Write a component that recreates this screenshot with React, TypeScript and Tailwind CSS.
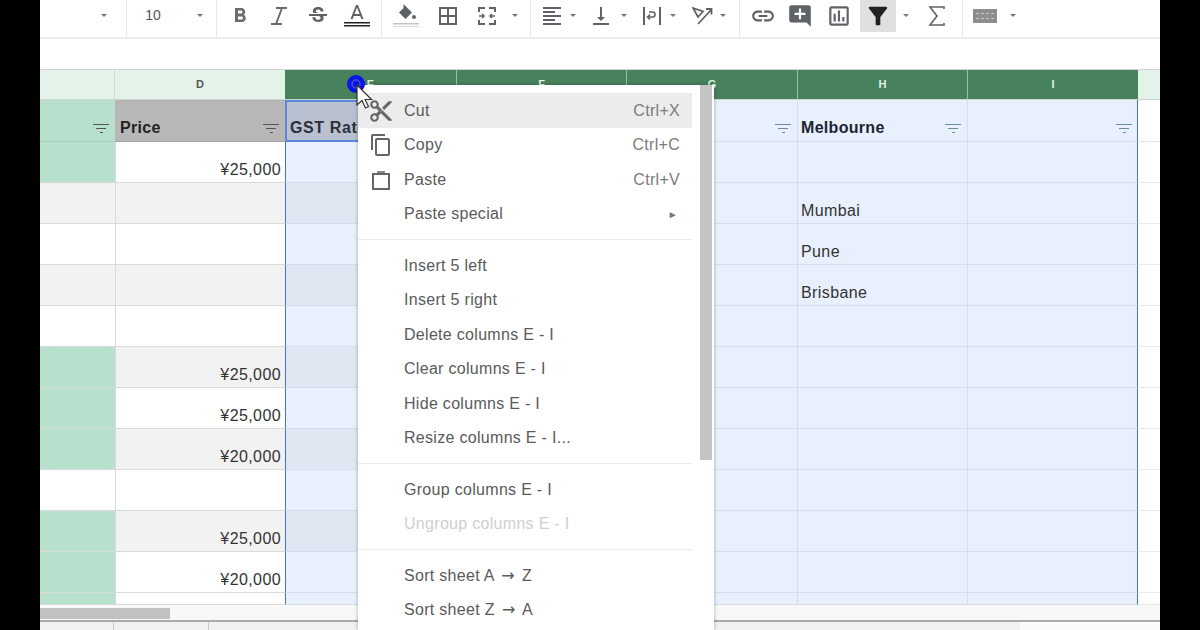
import React from 'react';

const arial = '[font-family:"Liberation_Sans",Arial,sans-serif]';
const cols = 'grid-cols-[75px_170px_172px_170px_171px_170px_170px_22px]';

const Icon = ({ d, size = 22, className = 'fill-[#5f6368]' }: { d: string; size?: number; className?: string }) => (
  <svg width={size} height={size} viewBox="0 0 24 24" className={className}>
    <path d={d} fillRule="evenodd" />
  </svg>
);

const Caret = ({ className = '' }: { className?: string }) => (
  <div className={`flex h-[31px] w-[14px] items-center justify-center ${className}`}>
    <div className="h-0 w-0 border-x-[3px] border-t-[3px] border-x-transparent border-t-[#77797c]" />
  </div>
);

const Divider = ({ className = '' }: { className?: string }) => <div className={`h-full w-px bg-[#e8e8e8] ${className}`} />;

const Slot = ({ className = '', children }: { className?: string; children: React.ReactNode }) => (
  <div className={`flex h-[31px] items-center justify-center ${className}`}>{children}</div>
);

const Toolbar = () => (
  <div className="flex h-[39px] items-start border-b-2 border-[#ececec] bg-white">
    <div className="w-[57px]" />
    <Caret />
    <Divider className="ml-[15px]" />
    <Slot className="w-[52px] text-[14px] text-[#555]">10</Slot>
    <Caret className="ml-[14px]" />
    <Divider className="ml-[9px]" />
    <Slot className="ml-[3px] w-[39px]"><Icon size={24} className="fill-[#6a6d70]" d="M15.6 10.79c.97-.67 1.65-1.77 1.65-2.79 0-2.26-1.75-4-4-4H7v14h7.04c2.09 0 3.71-1.7 3.71-3.79 0-1.52-.86-2.82-2.15-3.42zM10 6.5h3c.83 0 1.5.67 1.5 1.5s-.67 1.5-1.5 1.5h-3v-3zm3.5 9H10v-3h3.5c.83 0 1.5.67 1.5 1.5s-.67 1.5-1.5 1.5z" /></Slot>
    <Slot className="w-[39px]">
      <svg width="22" height="22" viewBox="0 0 22 22" fill="none" stroke="#6a6d70" strokeWidth="2">
        <path d="M8 3h11M3 19h11M14 3 8 19" />
      </svg>
    </Slot>
    <Slot className="w-[39px]"><Icon size={24} d="M6.85 7.08C6.85 4.37 9.45 3 12.24 3c1.64 0 3 .49 3.9 1.28.77.65 1.46 1.73 1.46 3.24h-3.01c0-.31-.05-.59-.15-.85-.29-.86-1.2-1.28-2.25-1.28-1.86 0-2.34.93-2.34 1.7 0 .48.25.88.74 1.21.38.25.77.48 1.41.7H7.39c-.21-.34-.54-.89-.54-1.92zM21 12v-2H3v2h9.62c1.15.45 1.96.75 1.96 1.97 0 1-.81 1.67-2.28 1.67-1.54 0-2.93-.54-2.93-2.51H6.4c0 .55.08 1.13.24 1.58.81 2.29 3.29 3.3 5.67 3.3 2.27 0 5.3-.89 5.3-4.05 0-.3-.01-1.16-.48-1.96H21z" /></Slot>
    <Slot className="w-[39px]">
      <svg width="28" height="28" viewBox="0 0 28 28">
        <path className="fill-[#5f6368]" fillRule="evenodd" d="M13 3 7.5 17h2.2l1.1-3h6.4l1.1 3h2.2L15 3h-2zm-1.5 9L14 5.5l2.5 6.5h-5z" />
        <rect x="1" y="20" width="26" height="1.5" fill="#222" />
        <rect x="1" y="23" width="26" height="1.5" fill="#222" />
      </svg>
    </Slot>
    <div className="ml-[5px] h-full"><Divider /></div>
    <Slot className="w-[48px]">
      <svg width="28" height="28" viewBox="0 0 28 28">
        <path className="fill-[#5f6368]" d="M11.5 2 20 10.5 13.5 17 7 10.5 11.5 6z" />
        <circle cx="22" cy="15" r="2" fill="#5f6368" />
        <rect x="1" y="21" width="26" height="1.5" fill="#c4c4c4" />
        <rect x="1" y="24" width="26" height="1" fill="#d8d8d8" />
      </svg>
    </Slot>
    <Slot className="w-[35px]"><Icon size={24} d="M3 3v18h18V3H3zm8 16H5v-6h6v6zm0-8H5V5h6v6zm8 8h-6v-6h6v6zm0-8h-6V5h6v6z" /></Slot>
    <Slot className="w-[44px]">
      <svg width="22" height="22" viewBox="0 0 22 22" fill="none" stroke="#5f6368" strokeWidth="2">
        <path d="M3 7V3h6M13 3h6v4M3 15v4h6M13 19h6v-4" />
        <path d="M3 11h5M6 9l2 2-2 2M19 11h-5M16 9l-2 2 2 2" strokeWidth="1.6" />
      </svg>
    </Slot>
    <Caret className="-ml-px" />
    <div className="ml-[8px] h-full"><Divider /></div>
    <Slot className="ml-[7px] w-[28px]"><Icon size={24} d="M15 15H3v2h12v-2zm0-8H3v2h12V7zM3 13h18v-2H3v2zm0 8h18v-2H3v2zM3 3v2h18V3H3z" /></Slot>
    <Caret />
    <Slot className="ml-[7px] w-[28px]"><Icon size={24} d="M16 13h-3V3h-2v10H8l4 4 4-4zM4 19v2h16v-2H4z" /></Slot>
    <Caret className="ml-[2px]" />
    <Slot className="ml-[7px] w-[28px]">
      <svg width="20" height="20" viewBox="0 0 20 20" fill="none" stroke="#5f6368" strokeWidth="2">
        <path d="M2 1v18M18 1v18" />
        <path d="M7 6h3.5a2.5 2.5 0 0 1 0 5H6M8 8.5 5.5 11 8 13.5" strokeWidth="1.6" />
      </svg>
    </Slot>
    <Caret />
    <Slot className="ml-[8px] w-[28px]">
      <svg width="21" height="19" viewBox="0 0 21 19" fill="none" stroke="#5f6368" strokeWidth="1.8">
        <path d="M1 2 11 5.5 6 11zM6 18 19 4M14 3h5.5v5.5" />
      </svg>
    </Slot>
    <Caret />
    <div className="ml-[9px] h-full"><Divider /></div>
    <Slot className="ml-[9px] w-[28px]"><Icon size={26} d="M3.9 12c0-1.71 1.39-3.1 3.1-3.1h4V7H7c-2.76 0-5 2.24-5 5s2.24 5 5 5h4v-1.9H7c-1.71 0-3.1-1.39-3.1-3.1zM8 13h8v-2H8v2zm9-6h-4v1.9h4c1.71 0 3.1 1.39 3.1 3.1s-1.39 3.1-3.1 3.1h-4V17h4c2.76 0 5-2.24 5-5s-2.24-5-5-5z" /></Slot>
    <Slot className="ml-[9px] w-[28px]"><Icon size={26} d="M22 4c0-1.1-.9-2-2-2H4c-1.1 0-2 .9-2 2v12c0 1.1.9 2 2 2h14l4 4V4zm-5 7h-4v4h-2v-4H7V9h4V5h2v4h4v2z" /></Slot>
    <Slot className="ml-[11px] w-[28px]"><Icon size={26} d="M9 17H7v-7h2v7zm4 0h-2V7h2v10zm4 0h-2v-4h2v4zm2 2H5V5h14v14zm0-16H5c-1.1 0-2 .9-2 2v14c0 1.1.9 2 2 2h14c1.1 0 2-.9 2-2V5c0-1.1-.9-2-2-2z" /></Slot>
    <div className="ml-[7px] flex h-[32px] w-[36px] items-center justify-center bg-[#e0e0e0]">
      <Icon size={28} className="fill-[#202124]" d="M4.25 5.61C6.27 8.2 10 13 10 13v6c0 .55.45 1 1 1h2c.55 0 1-.45 1-1v-6s3.72-4.8 5.74-7.39C20.25 4.95 19.78 4 18.95 4H5.04c-.83 0-1.3.95-.79 1.61z" />
    </div>
    <Caret className="ml-[3px]" />
    <Slot className="ml-[10px] w-[28px]">
      <svg width="18" height="22" viewBox="0 0 18 22" fill="none" stroke="#5f6368" strokeWidth="1.6">
        <path d="M16 4V2H2l7 9-7 9h14v-2" />
      </svg>
    </Slot>
    <div className="ml-[11px] h-full"><Divider /></div>
    <Slot className="ml-[8px] w-[28px]">
      <div className="flex h-[14px] w-[24px] items-center justify-center bg-[#8d8d8d]">
        <div className="h-[6px] w-[18px] border-y border-dashed border-[#c9c9c9]" />
      </div>
    </Slot>
    <Caret className="ml-[7px]" />
  </div>
);

const FilterLines = ({ className = 'bg-[#555]' }: { className?: string }) => (
  <div className="flex w-4 shrink-0 flex-col items-center gap-[2.5px] pb-[8px]">
    <div className={`h-[1.5px] w-4 ${className}`} />
    <div className={`h-[1.5px] w-[10px] ${className}`} />
    <div className={`h-[1.5px] w-[3px] ${className}`} />
  </div>
);

const ColHead = ({ label, className }: { label: string; className: string }) => (
  <div className={`flex items-center justify-center text-[11px] font-bold ${className}`}>{label}</div>
);

const ColumnHeader = () => (
  <div className={`grid h-[31px] border-y border-[#cfd4d0] ${cols}`}>
    <div className="border-r border-[#cfdcd4] bg-[#e4f3ea]" />
    <ColHead label="D" className="bg-[#e4f3ea] text-[#555]" />
    <ColHead label="E" className="border-r border-[#9dbca9] bg-[#47825c] text-[#dff3e6]" />
    <ColHead label="F" className="border-r border-[#9dbca9] bg-[#47825c] text-[#dff3e6]" />
    <ColHead label="G" className="border-r border-[#9dbca9] bg-[#47825c] text-[#dff3e6]" />
    <ColHead label="H" className="border-r border-[#9dbca9] bg-[#47825c] text-[#dff3e6]" />
    <ColHead label="I" className="bg-[#47825c] text-[#dff3e6]" />
    <div className="bg-[#e4f3ea]" />
  </div>
);

const HeaderRow = () => (
  <div className={`grid h-[42px] text-[16px] font-bold leading-[20px] tracking-[0.3px] text-[#222] ${cols}`}>
    <div className="flex items-end justify-end border-b border-[#a9cdbb] bg-[#b7e1cd] pr-[6px]"><FilterLines /></div>
    <div className="flex items-end justify-between border-b border-[#a5a5a5] bg-[#b7b7b7] pl-[5px] pr-[6px]">
      <span className="pb-[3px]">Price</span>
      <FilterLines />
    </div>
    <div className="flex items-end overflow-hidden border-2 border-[#5a86dc] bg-[#b9c1d1] pl-[3px] text-[#2c3038]">
      <span className="pb-[2px] tracking-[0.6px]">GST Rate</span>
    </div>
    <div className="flex items-end justify-end border-b border-r border-[#d5dcea] bg-[#e8f0fe] pr-[6px]"><FilterLines className="bg-[#6c8f96]" /></div>
    <div className="flex items-end justify-end border-b border-r border-[#d5dcea] bg-[#e8f0fe] pr-[6px]"><FilterLines className="bg-[#6c8f96]" /></div>
    <div className="flex items-end justify-between border-b border-r border-[#d5dcea] bg-[#e8f0fe] pl-[3px] pr-[6px] text-[#1d2433]">
      <span className="pb-[3px]">Melbourne</span>
      <FilterLines className="bg-[#6c8f96]" />
    </div>
    <div className="flex items-end justify-end border-b border-r border-[#d5dcea] border-r-[#3f72e0] bg-[#e8f0fe] pr-[5px]"><FilterLines className="bg-[#6c8f96]" /></div>
    <div className="border-b border-[#e4e4e4] bg-white" />
  </div>
);

const rows = [
  { left: 'bg-[#b7e1cd]', gray: false, price: '¥25,000', city: '' },
  { left: 'bg-[#f2f2f2]', gray: true, price: '', city: 'Mumbai' },
  { left: 'bg-white', gray: false, price: '', city: 'Pune' },
  { left: 'bg-[#f2f2f2]', gray: true, price: '', city: 'Brisbane' },
  { left: 'bg-white', gray: false, price: '', city: '' },
  { left: 'bg-[#b7e1cd]', gray: true, price: '¥25,000', city: '' },
  { left: 'bg-[#b7e1cd]', gray: false, price: '¥25,000', city: '' },
  { left: 'bg-[#b7e1cd]', gray: true, price: '¥20,000', city: '' },
  { left: 'bg-white', gray: false, price: '', city: '' },
  { left: 'bg-[#b7e1cd]', gray: true, price: '¥25,000', city: '' },
  { left: 'bg-[#b7e1cd]', gray: false, price: '¥20,000', city: '' },
  { left: 'bg-[#b7e1cd]', gray: false, price: '', city: '' },
];

const blueCell = 'border-b border-r border-[#d5dcea] bg-[#e8f0fe]';

const DataRow = ({ row, last }: { row: (typeof rows)[number]; last: boolean }) => (
  <div className={`grid text-[16px] leading-[20px] tracking-[0.4px] text-[#333] ${cols} ${last ? 'h-[12px]' : 'h-[41px]'}`}>
    <div className={`border-b border-[#dadada] ${row.left}`} />
    <div className={`flex items-end justify-end border-b border-l border-[#dadada] pb-[2px] pr-[4px] ${row.gray ? 'bg-[#f2f2f2]' : 'bg-white'}`}>{row.price}</div>
    <div className={`border-b border-l border-r border-b-[#d5dcea] border-l-[#3f72e0] border-r-[#d5dcea] ${row.gray ? 'bg-[#dfe7f3]' : 'bg-[#e8f0fe]'}`} />
    <div className={blueCell} />
    <div className={blueCell} />
    <div className={`flex items-end pb-[2px] pl-[3px] ${blueCell}`}>{row.city}</div>
    <div className="border-b border-r border-b-[#d5dcea] border-r-[#3f72e0] bg-[#e8f0fe]" />
    <div className="border-b border-[#e8e8e8] bg-white" />
  </div>
);

const BottomBars = () => (
  <>
    <div className="h-[17px] border-b-2 border-[#aaa] bg-[#f8f8f8] pt-[3px]">
      <div className="h-[11px] w-[130px] bg-[#c1c1c1]" />
    </div>
    <div className="flex h-[8px] bg-[#f1f1f1]">
      <div className="w-[74px] border-r border-[#c8c8c8]" />
      <div className="w-[95px] border-r border-[#c8c8c8]" />
      <div className="ml-[811px] flex-1 bg-[#fafafa]" />
    </div>
  </>
);

const MenuItem = ({ label, shortcut, icon, hover, disabled, arrow }: {
  label: React.ReactNode;
  shortcut?: string;
  icon?: React.ReactNode;
  hover?: boolean;
  disabled?: boolean;
  arrow?: boolean;
}) => (
  <div className={`flex h-[34.5px] w-[334px] shrink-0 items-center pt-px ${hover ? 'bg-[#ececec]' : ''}`}>
    <div className="flex w-[46px] shrink-0 items-center justify-center">{icon}</div>
    <span className={disabled ? 'text-[#cfcfcf]' : 'text-[#5a5a5a]'}>{label}</span>
    {shortcut && <span className="ml-auto pr-[12px] text-[#7b7b7b]">{shortcut}</span>}
    {arrow && <span className="ml-auto pr-[14px] text-[10px] text-[#777]">►</span>}
  </div>
);

const Sep = () => (
  <div className="flex h-[17px] w-[334px] shrink-0 items-center">
    <div className="h-px w-full bg-[#ededed]" />
  </div>
);

const SortArrow = () => <span className='mx-[2.5px] [font-family:"DejaVu_Sans",sans-serif]'>→</span>;

const Menu = () => (
  <div className={`absolute left-[358px] top-[85px] flex h-[545px] w-[356px] flex-col overflow-hidden bg-white pt-2 text-[16px] tracking-[0.3px] shadow-[0_0_4px_rgba(0,0,0,0.3)] ${arial}`}>
    <div className="absolute right-[2px] top-0 h-[375px] w-[12px] bg-[#c4c4c4]" />
    <MenuItem hover label="Cut" shortcut="Ctrl+X" icon={<Icon size={26} className="fill-[#666]" d="M9.64 7.64c.23-.5.36-1.05.36-1.64 0-2.21-1.79-4-4-4S2 3.79 2 6s1.79 4 4 4c.59 0 1.14-.13 1.64-.36L10 12l-2.36 2.36C7.14 14.13 6.59 14 6 14c-2.21 0-4 1.79-4 4s1.79 4 4 4 4-1.79 4-4c0-.59-.13-1.14-.36-1.64L12 14l7 7h3v-1L9.64 7.64zM6 8c-1.1 0-2-.89-2-2s.9-2 2-2 2 .89 2 2-.9 2-2 2zm0 12c-1.1 0-2-.89-2-2s.9-2 2-2 2 .89 2 2-.9 2-2 2zm6-7.5c-.28 0-.5-.22-.5-.5s.22-.5.5-.5.5.22.5.5-.22.5-.5.5zM19 3l-6 6 2 2 7-7V3z" />} />
    <MenuItem label="Copy" shortcut="Ctrl+C" icon={<Icon size={24} className="fill-[#666]" d="M16 1H4c-1.1 0-2 .9-2 2v14h2V3h12V1zm3 4H8c-1.1 0-2 .9-2 2v14c0 1.1.9 2 2 2h11c1.1 0 2-.9 2-2V7c0-1.1-.9-2-2-2zm0 16H8V7h11v14z" />} />
    <MenuItem label="Paste" shortcut="Ctrl+V" icon={
      <svg width="20" height="22" viewBox="0 0 20 22" fill="none" stroke="#666" strokeWidth="2">
        <path d="M2 5h16v15H2z" />
        <path d="M7 6V3h6v3" strokeWidth="1.6" />
      </svg>
    } />
    <MenuItem label="Paste special" arrow />
    <Sep />
    <MenuItem label="Insert 5 left" />
    <MenuItem label="Insert 5 right" />
    <MenuItem label="Delete columns E - I" />
    <MenuItem label="Clear columns E - I" />
    <MenuItem label="Hide columns E - I" />
    <MenuItem label="Resize columns E - I..." />
    <Sep />
    <MenuItem label="Group columns E - I" />
    <MenuItem disabled label="Ungroup columns E - I" />
    <Sep />
    <MenuItem label={<>Sort sheet A <SortArrow /> Z</>} />
    <MenuItem label={<>Sort sheet Z <SortArrow /> A</>} />
  </div>
);

const Pointer = () => (
  <div className="absolute left-[346px] top-[75px]">
    <svg width="32" height="36" viewBox="0 0 32 36">
      <circle cx="10" cy="9" r="9" fill="#0a14e6" />
      <circle cx="10" cy="9" r="4" fill="none" stroke="#4a52c8" strokeWidth="1.5" />
      <path d="M11 10v20l5-4.5 3.5 7.5 3-1.5-3.5-7h6.5z" fill="#fff" stroke="#333" strokeWidth="1.2" />
    </svg>
  </div>
);

export default function App() {
  return (
    <div className={`relative flex h-[630px] w-[1200px] justify-center overflow-hidden bg-black ${arial}`}>
      <div className="h-[630px] w-[1120px] overflow-hidden bg-white">
        <Toolbar />
        <div className="h-[30px] bg-white" />
        <ColumnHeader />
        <HeaderRow />
        {rows.map((row, i) => (
          <DataRow key={i} row={row} last={i === rows.length - 1} />
        ))}
        <BottomBars />
      </div>
      <Menu />
      <Pointer />
    </div>
  );
}
